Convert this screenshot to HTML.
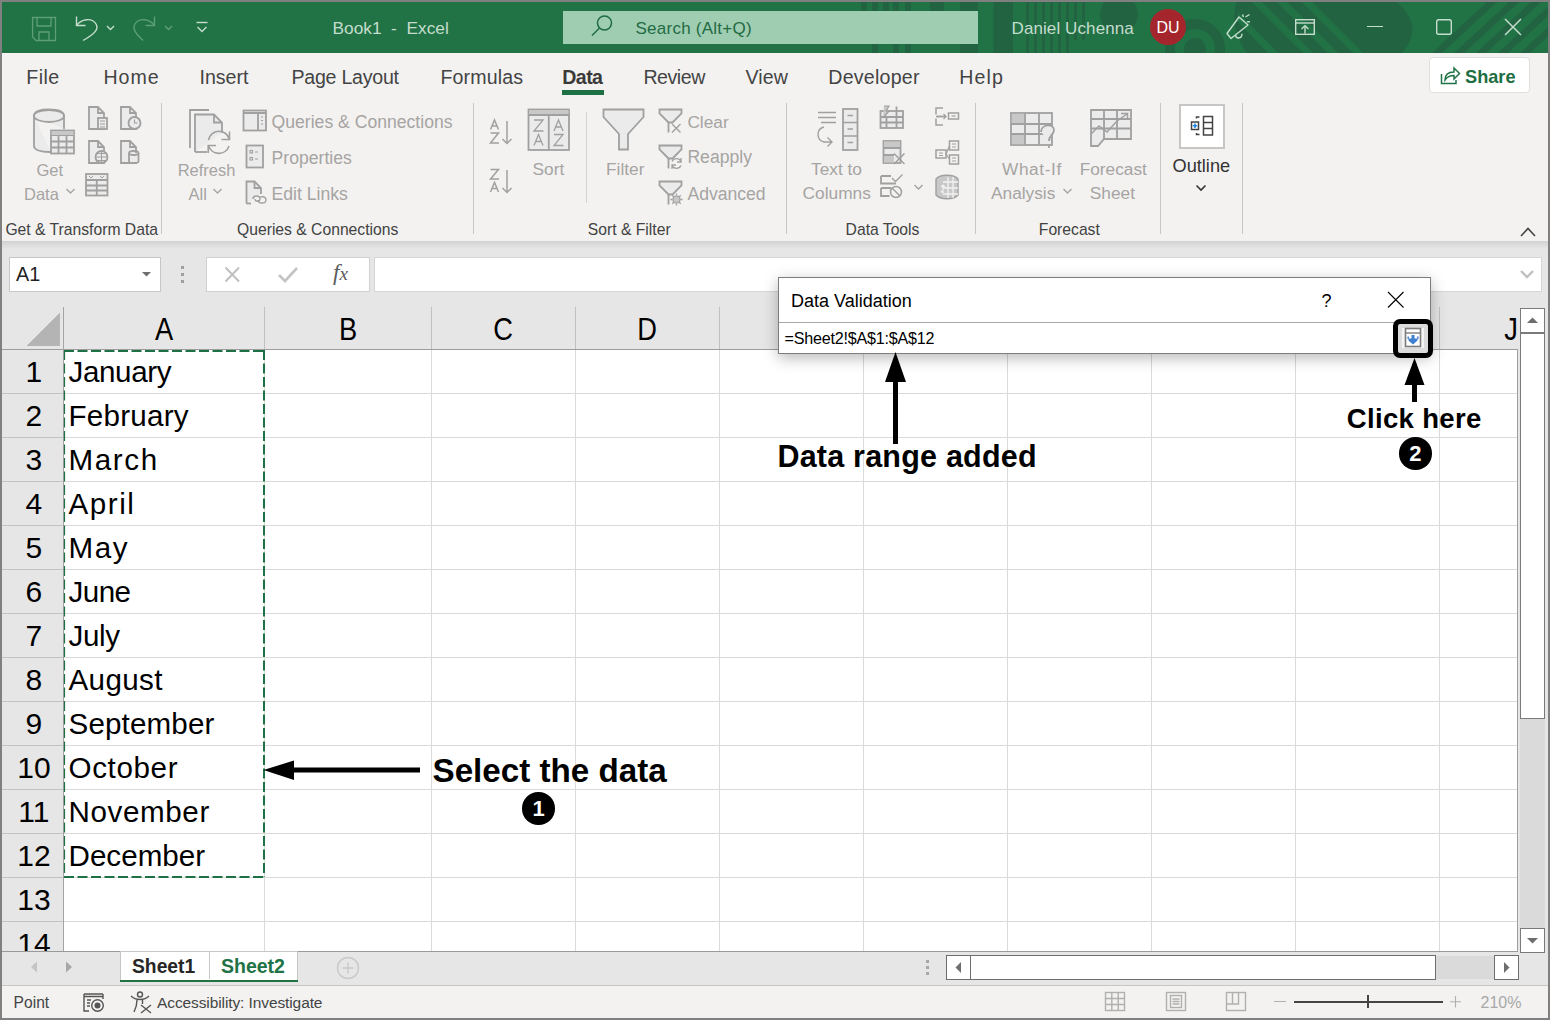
<!DOCTYPE html>
<html><head><meta charset="utf-8">
<style>
*{margin:0;padding:0;box-sizing:border-box}
html,body{width:1550px;height:1020px;overflow:hidden;background:#808080;font-family:"Liberation Sans",sans-serif;position:relative}
.a{position:absolute}
.t{position:absolute;line-height:1;white-space:nowrap}
svg.a{overflow:visible}
</style></head><body>
<div class="a" style="left:2px;top:2px;width:1546px;height:51px;background:#217346;"></div>
<svg class="a" style="left:2px;top:2px;" width="1546" height="51" viewBox="0 0 1546 51"><defs><clipPath id="tc"><rect x="0" y="0" width="1546" height="51"/></clipPath></defs>
<g clip-path="url(#tc)" fill="#226342">
<rect x="859" y="0" width="6" height="9"/><rect x="881" y="0" width="6" height="9"/><rect x="928" y="0" width="14" height="9"/><rect x="870" y="0" width="6" height="51"/><rect x="891" y="0" width="6" height="51"/><rect x="903" y="0" width="6" height="51"/><rect x="958" y="0" width="18" height="51"/><rect x="991.5" y="0" width="19.5" height="51"/><rect x="1024" y="0" width="3" height="51"/><rect x="1032" y="0" width="3" height="51"/><rect x="1040" y="0" width="3" height="51"/><rect x="1048" y="0" width="3" height="51"/><rect x="1056" y="0" width="3" height="51"/><rect x="1064" y="0" width="3" height="51"/><rect x="1072" y="0" width="3" height="38"/><rect x="1080" y="0" width="3" height="38"/>
<circle cx="1117" cy="12" r="19"/>
<circle cx="1193" cy="47" r="25" fill="none" stroke="#226342" stroke-width="10"/><circle cx="1193" cy="47" r="11"/>

<path d="M1235 -2 H1393 Q1425 25 1398 53 H1246 Q1226 25 1235 -2 Z"/><g fill="#217346"><path d="M1236 10 L1236 20 L1266 51 L1276 51 Z"/><path d="M1250 0 L1260 0 L1311 51 L1301 51 Z"/><path d="M1275 0 L1285 0 L1336 51 L1326 51 Z"/><path d="M1300 0 L1310 0 L1361 51 L1351 51 Z"/></g>
<path d="M1430 51 L1440 51 L1495 0 L1485 0 Z"/><path d="M1452 51 L1462 51 L1517 0 L1507 0 Z"/><path d="M1474 51 L1484 51 L1539 0 L1529 0 Z"/><path d="M1496 51 L1506 51 L1561 0 L1551 0 Z"/><path d="M1518 51 L1528 51 L1583 0 L1573 0 Z"/>
</g></svg>
<svg class="a" style="left:30px;top:15px;" width="30" height="30" viewBox="0 0 30 30"><g fill="none" stroke="#5d9e77" stroke-width="1.3"><path d="M2.6 2.5 H25.5 V25.5 H6 L2.6 22 Z"/><path d="M7 2.5 V11 H21 V2.5"/><path d="M9 25.5 V17 H19 V25.5"/></g></svg>
<svg class="a" style="left:72px;top:12px;" width="50" height="32" viewBox="0 0 50 32"><g fill="none" stroke="#c4ddcc" stroke-width="1.4"><path d="M4.5 4.5 V13.5 H13.5"/><path d="M4.5 13.5 C9 7 20 5 24 12 C27 17 23 22 11 28.5"/><path d="M35 14 L38.5 17.5 L42 14"/></g></svg>
<svg class="a" style="left:130px;top:12px;" width="50" height="32" viewBox="0 0 50 32"><g fill="none" stroke="#5d9e77" stroke-width="1.4"><path d="M24.5 4.5 V13.5 H15.5"/><path d="M24.5 13.5 C20 7 9 5 5 12 C2 17 6 22 13 28.5"/><path d="M35 14 L38.5 17.5 L42 14"/></g></svg>
<svg class="a" style="left:194px;top:18px;" width="16" height="18" viewBox="0 0 16 18"><g fill="none" stroke="#c4ddcc" stroke-width="1.4"><path d="M2.5 4.5 H13.5"/><path d="M3.5 9 L8 13.5 L12.5 9"/></g></svg>
<div class="t" style="left:332.5px;top:19.9px;font-size:17.3px;color:#c4ddcc;">Book1&nbsp;&nbsp;-&nbsp;&nbsp;Excel</div>
<div class="a" style="left:563px;top:11px;width:415px;height:33px;background:#9fcdb2;"></div>
<svg class="a" style="left:588px;top:13px;" width="28" height="28" viewBox="0 0 28 28"><g fill="none" stroke="#1f6b43" stroke-width="1.5"><circle cx="16.5" cy="10" r="7"/><path d="M11.5 15 L4 22.5"/></g></svg>
<div class="t" style="left:635.5px;top:19.9px;font-size:17px;color:#1f6b43;letter-spacing:0.25px;">Search (Alt+Q)</div>
<div class="t" style="left:1011.5px;top:20.2px;font-size:17px;color:#c4ddcc;letter-spacing:0.1px;">Daniel Uchenna</div>
<div class="a" style="left:1150px;top:9px;width:36px;height:36px;border-radius:50%;background:#a4262c"></div>
<div class="t" style="left:1168px;transform:translateX(-50%);top:20.1px;font-size:16px;color:#fff;">DU</div>
<svg class="a" style="left:1224px;top:12px;" width="30" height="30" viewBox="0 0 30 30"><g fill="none" stroke="#c4ddcc" stroke-width="1.4" stroke-linejoin="round"><path d="M3 21.5 L7 26.5 L24 13 L15 5 Z"/><path d="M11.5 23.5 A3.2 3.2 0 0 0 17.8 21.8"/><path d="M18.5 2.5 L19.5 5"/><path d="M21.5 5 L25.5 2.5"/><path d="M23 9.8 L26 9.8"/></g></svg>
<svg class="a" style="left:1293px;top:17px;" width="24" height="20" viewBox="0 0 24 20"><g fill="none" stroke="#c4ddcc" stroke-width="1.4"><rect x="2.7" y="2.7" width="18.6" height="14.6"/><path d="M2.7 6 H21.3"/><path d="M12 16.5 V9"/><path d="M8.5 12 L12 8.7 L15.5 12"/></g></svg>
<div class="a" style="left:1367px;top:26px;width:16px;height:1.4px;background:#c4ddcc;"></div>
<svg class="a" style="left:1434px;top:17px;" width="20" height="20" viewBox="0 0 20 20"><rect x="2.7" y="2.7" width="14.6" height="14.6" rx="2" fill="none" stroke="#c4ddcc" stroke-width="1.4"/></svg>
<svg class="a" style="left:1503px;top:17px;" width="20" height="20" viewBox="0 0 20 20"><g stroke="#c4ddcc" stroke-width="1.5"><path d="M2 2 L18 18 M18 2 L2 18"/></g></svg>
<div class="a" style="left:2px;top:53px;width:1546px;height:188px;background:#f3f2f1;"></div>
<div class="t" style="left:26.3px;top:67.5px;font-size:19.6px;color:#444;letter-spacing:0.42px;">File</div>
<div class="t" style="left:103.5px;top:67.5px;font-size:19.6px;color:#444;letter-spacing:0.92px;">Home</div>
<div class="t" style="left:199.5px;top:67.5px;font-size:19.6px;color:#444;letter-spacing:-0.03px;">Insert</div>
<div class="t" style="left:291.40000000000003px;top:67.5px;font-size:19.6px;color:#444;letter-spacing:-0.24px;">Page Layout</div>
<div class="t" style="left:440.40000000000003px;top:67.5px;font-size:19.6px;color:#444;letter-spacing:0.16px;">Formulas</div>
<div class="t" style="left:562.2px;top:67.5px;font-size:19.6px;color:#3b3a39;font-weight:bold;letter-spacing:-0.55px">Data</div>
<div class="t" style="left:643.4px;top:67.5px;font-size:19.6px;color:#444;letter-spacing:-0.47px;">Review</div>
<div class="t" style="left:745.5999999999999px;top:67.5px;font-size:19.6px;color:#444;letter-spacing:0.05px;">View</div>
<div class="t" style="left:828.3px;top:67.5px;font-size:19.6px;color:#444;letter-spacing:0.24px;">Developer</div>
<div class="t" style="left:959.1999999999999px;top:67.5px;font-size:19.6px;color:#444;letter-spacing:1.12px;">Help</div>
<div class="a" style="left:562px;top:90px;width:42px;height:4.5px;background:#1e7145;"></div>
<div class="a" style="left:1429px;top:57px;width:101px;height:36px;background:#fff;border:1px solid #e1dfdd;border-radius:4px"></div>
<svg class="a" style="left:1439px;top:64px;" width="22" height="22" viewBox="0 0 22 22"><g fill="none" stroke="#217346" stroke-width="1.5"><path d="M2.5 10 V19.5 H17 V16"/><path d="M6 16 C6 10 10 8 15 8 V4 L20.5 9.5 L15 15 V11.5 C11 11.5 8 13 6 16 Z"/></g></svg>
<div class="t" style="left:1465px;top:67.9px;font-size:18.2px;color:#1f6e43;font-weight:bold;">Share</div>
<div class="a" style="left:161px;top:103px;width:1px;height:131px;background:#c8c6c4;"></div>
<div class="a" style="left:473px;top:103px;width:1px;height:131px;background:#c8c6c4;"></div>
<div class="a" style="left:786px;top:103px;width:1px;height:131px;background:#c8c6c4;"></div>
<div class="a" style="left:975px;top:103px;width:1px;height:131px;background:#c8c6c4;"></div>
<div class="a" style="left:1160px;top:103px;width:1px;height:131px;background:#c8c6c4;"></div>
<div class="a" style="left:1242px;top:103px;width:1px;height:131px;background:#c8c6c4;"></div>
<div class="a" style="left:586px;top:112px;width:1px;height:91px;background:#d4d2d0;"></div>
<div class="t" style="left:5.4px;top:221.5px;font-size:15.7px;color:#424242;">Get &amp; Transform Data</div>
<div class="t" style="left:237px;top:221.5px;font-size:15.7px;color:#424242;">Queries &amp; Connections</div>
<div class="t" style="left:587.8px;top:221.5px;font-size:15.7px;color:#424242;">Sort &amp; Filter</div>
<div class="t" style="left:845.6px;top:221.5px;font-size:15.7px;color:#424242;">Data Tools</div>
<div class="t" style="left:1038.8px;top:221.5px;font-size:15.7px;color:#424242;">Forecast</div>
<svg class="a" style="left:31px;top:107px;" width="46" height="50" viewBox="0 0 46 50"><g fill="none" stroke="#a0a0a0" stroke-width="1.8"><path d="M3 9 V39 C3 43 10 45 18 45 H20" fill="#ebebeb"/><path d="M3 9 C3 4 10 2.5 17.5 2.5 C25 2.5 33 4 33 9 V22" fill="#ebebeb"/><ellipse cx="18" cy="9" rx="15" ry="6" fill="#ebebeb"/><rect x="20" y="23.5" width="23" height="23" fill="#ebebeb"/><path d="M20 28 H43 M20 34.5 H43 M20 40.5 H43 M27.5 28 V46.5 M35.5 28 V46.5" /><rect x="20.5" y="24" width="22" height="4" fill="#c8c8c8" stroke="none"/></g></svg>
<div class="t" style="left:36.5px;top:162.3px;font-size:16.5px;color:#a6a4a2;">Get</div>
<div class="t" style="left:24px;top:186.3px;font-size:16.5px;color:#a6a4a2;">Data</div>
<svg class="a" style="left:64px;top:186px;" width="14" height="10" viewBox="0 0 14 10"><path d="M2.5 3 L6.5 7 L10.5 3" fill="none" stroke="#a6a4a2" stroke-width="1.4"/></svg>
<svg class="a" style="left:87px;top:106px;" width="24" height="26" viewBox="0 0 24 26"><g fill="none" stroke="#a0a0a0" stroke-width="1.8"><path d="M2 1 H11 L17 7 V23 H2 Z" fill="#ebebeb"/><path d="M11 1 V7 H17"/><rect x="11" y="12" width="9" height="11" fill="#ebebeb"/><path d="M13 15 H18 M13 18 H18 M13 21 H18" stroke-width="1.2"/></g></svg>
<svg class="a" style="left:119px;top:106px;" width="24" height="26" viewBox="0 0 24 26"><g fill="none" stroke="#a0a0a0" stroke-width="1.8"><path d="M2 1 H11 L17 7 V23 H2 Z" fill="#ebebeb"/><path d="M11 1 V7 H17"/><circle cx="15.5" cy="17" r="6" fill="#ebebeb"/><path d="M15.5 13.5 V17 H18.5" stroke-width="1.2"/></g></svg>
<svg class="a" style="left:87px;top:140px;" width="24" height="26" viewBox="0 0 24 26"><g fill="none" stroke="#a0a0a0" stroke-width="1.8"><path d="M2 1 H11 L17 7 V23 H2 Z" fill="#ebebeb"/><path d="M11 1 V7 H17"/><circle cx="14.5" cy="17" r="6" fill="#ebebeb"/><path d="M8.5 17 H20.5 M14.5 11 V23 M10 13.5 H19 M10 20.5 H19" stroke-width="1"/></g></svg>
<svg class="a" style="left:119px;top:140px;" width="24" height="26" viewBox="0 0 24 26"><g fill="none" stroke="#a0a0a0" stroke-width="1.8"><path d="M2 1 H11 L17 7 V23 H2 Z" fill="#ebebeb"/><path d="M11 1 V7 H17"/><path d="M10 13 V21.5 C10 23.5 19.5 23.5 19.5 21.5 V13" fill="#ebebeb"/><ellipse cx="14.75" cy="13" rx="4.75" ry="2"/></g></svg>
<svg class="a" style="left:84px;top:172px;" width="26" height="26" viewBox="0 0 26 26"><g fill="none" stroke="#a0a0a0" stroke-width="1.8"><rect x="2" y="2" width="21.5" height="21.5" fill="#ebebeb"/><path d="M2 8 H23.5 M2 13.5 H23.5 M2 18.5 H23.5 M12.75 8 V23.5"/><path d="M5 4 L7 6 L9 4 M16 4 L18 6 L20 4" stroke-width="1"/></g></svg>
<svg class="a" style="left:187px;top:107px;" width="48" height="50" viewBox="0 0 48 50"><g fill="none" stroke="#a0a0a0" stroke-width="1.8"><path d="M3 41 V3 H22"/><path d="M8 45 V7.5 H27 L35 15.5 V26" fill="#ebebeb"/><path d="M27 7.5 V15.5 H35"/><path d="M8 45 H20"/><path d="M21.5 33 A10.7 10.7 0 0 1 42.3 32 M42.5 24.5 V32.5 H34.5 M42 39 A10.7 10.7 0 0 1 21.5 38.5 M21.2 46 V38.5 H29" stroke-width="1.6"/></g></svg>
<div class="t" style="left:177.7px;top:162.3px;font-size:16.5px;color:#a6a4a2;">Refresh</div>
<div class="t" style="left:188.5px;top:186.3px;font-size:16.5px;color:#a6a4a2;">All</div>
<svg class="a" style="left:211px;top:186px;" width="14" height="10" viewBox="0 0 14 10"><path d="M2.5 3 L6.5 7 L10.5 3" fill="none" stroke="#a6a4a2" stroke-width="1.4"/></svg>
<svg class="a" style="left:242px;top:109px;" width="26" height="24" viewBox="0 0 26 24"><g fill="none" stroke="#a0a0a0" stroke-width="1.8"><rect x="1.5" y="1.5" width="22.5" height="20" fill="#ebebeb"/><path d="M1.5 4 H24 M16 4 V21.5"/><path d="M19 8 H21 M19 11.5 H21 M19 15 H21" stroke-width="1.2"/></g></svg>
<svg class="a" style="left:245px;top:144px;" width="20" height="26" viewBox="0 0 20 26"><g fill="none" stroke="#a0a0a0" stroke-width="1.8"><rect x="1.5" y="1.5" width="16.5" height="22" fill="#ebebeb"/><rect x="5" y="6.5" width="2.5" height="2.5" stroke-width="1.1"/><rect x="5" y="13.5" width="2.5" height="2.5" stroke-width="1.1"/><path d="M10 8 H13 M10 15 H13" stroke-width="1.1"/></g></svg>
<svg class="a" style="left:245px;top:180px;" width="24" height="26" viewBox="0 0 24 26"><g fill="none" stroke="#a0a0a0" stroke-width="1.8"><path d="M1.5 23.5 V1.5 H9.5 L16 8 V14" fill="#ebebeb"/><path d="M9.5 1.5 V8 H16"/><path d="M1.5 23.5 H6"/><path d="M8 19 C8 15 15 15 15 19 C15 22 10 22 10 19 M13 20 C13 24 21 24 21 20 C21 16 15 16 15 18" stroke-width="1.3"/></g></svg>
<div class="t" style="left:271.6px;top:114.2px;font-size:17.6px;color:#a6a4a2;">Queries &amp; Connections</div>
<div class="t" style="left:271.6px;top:150.0px;font-size:17.6px;color:#a6a4a2;">Properties</div>
<div class="t" style="left:271.6px;top:185.6px;font-size:17.6px;color:#a6a4a2;">Edit Links</div>
<svg class="a" style="left:488px;top:118px;" width="28" height="28" viewBox="0 0 28 28"><g fill="none" stroke="#a0a0a0" stroke-width="1.5"><path d="M2.5 11.5 L6.5 2 L10.5 11.5 M4 8 H9"/><path d="M2.5 15 H10.5 L2.5 25 H11"/><path d="M19 3 V25.5 M14.5 21 L19 25.5 L23.5 21"/></g></svg>
<svg class="a" style="left:488px;top:167px;" width="28" height="28" viewBox="0 0 28 28"><g fill="none" stroke="#a0a0a0" stroke-width="1.5"><path d="M2.5 2.5 H10.5 L2.5 12 H11"/><path d="M2.5 25 L6.5 15.5 L10.5 25 M4 21.5 H9"/><path d="M19 3 V25.5 M14.5 21 L19 25.5 L23.5 21"/></g></svg>
<svg class="a" style="left:527px;top:108px;" width="44" height="44" viewBox="0 0 44 44"><g fill="none" stroke="#a0a0a0" stroke-width="1.8"><rect x="1.5" y="1.5" width="40.5" height="40.5" fill="#ebebeb"/><rect x="2" y="2" width="39.5" height="5" fill="#c8c8c8" stroke="none"/><path d="M1.5 7 H42 M21.75 7 V42"/><path d="M7 12 H16 L7 23 H16.5 M7 37.5 L11.5 26.5 L16 37.5 M8.6 33.5 H14.4 M27 23 L31.5 12 L36 23 M28.6 19 H34.4 M27 26.5 H36 L27 37.5 H36.5" stroke-width="1.3"/></g></svg>
<div class="t" style="left:532.5px;top:160.6px;font-size:17.3px;color:#a6a4a2;">Sort</div>
<svg class="a" style="left:601px;top:107px;" width="46" height="46" viewBox="0 0 46 46"><g fill="none" stroke="#a0a0a0" stroke-width="1.8"><path d="M2.5 2.5 H42.5 V10 L27 27 V42.5 H18 V27 L2.5 10 Z" fill="#ebebeb"/></g></svg>
<div class="t" style="left:606px;top:160.6px;font-size:17.3px;color:#a6a4a2;">Filter</div>
<svg class="a" style="left:658px;top:108px;" width="26" height="26" viewBox="0 0 26 26"><g fill="none" stroke="#a0a0a0" stroke-width="1.8"><path d="M1.5 1.5 H23.5 V5.5 L14.5 14.5 H10.5 L1.5 5.5 Z" fill="#ebebeb"/><path d="M10.5 14.5 V24.5"/><path d="M14 16 L22.5 24.5 M22.5 16 L14 24.5" stroke-width="1.4"/></g></svg>
<svg class="a" style="left:658px;top:144px;" width="26" height="26" viewBox="0 0 26 26"><g fill="none" stroke="#a0a0a0" stroke-width="1.8"><path d="M1.5 1.5 H23.5 V5.5 L14.5 14.5 H10.5 L1.5 5.5 Z" fill="#ebebeb"/><path d="M10.5 14.5 V24.5"/><path d="M14 17.5 A5 5 0 0 1 23 17.5 M23 14 V18 H19 M23 21.5 A5 5 0 0 1 14 21.5 M14 25 V21 H18" stroke-width="1.3"/></g></svg>
<svg class="a" style="left:658px;top:180px;" width="26" height="26" viewBox="0 0 26 26"><g fill="none" stroke="#a0a0a0" stroke-width="1.8"><path d="M1.5 1.5 H23.5 V5.5 L14.5 14.5 H10.5 L1.5 5.5 Z" fill="#ebebeb"/><path d="M10.5 14.5 V24.5"/><circle cx="18.5" cy="19.5" r="3.5" fill="#c8c8c8" stroke-width="1.2"/><path d="M18.5 13.5 V15.5 M18.5 23.5 V25.5 M12.5 19.5 H14.5 M22.5 19.5 H24.5 M14.3 15.3 L15.7 16.7 M21.3 22.3 L22.7 23.7 M14.3 23.7 L15.7 22.3 M21.3 16.7 L22.7 15.3" stroke-width="1.3"/></g></svg>
<div class="t" style="left:687.4px;top:113.8px;font-size:17.3px;color:#a6a4a2;">Clear</div>
<div class="t" style="left:687.4px;top:149.0px;font-size:17.6px;color:#a6a4a2;">Reapply</div>
<div class="t" style="left:687.4px;top:185.7px;font-size:17.6px;color:#a6a4a2;">Advanced</div>
<svg class="a" style="left:814px;top:107px;" width="48" height="48" viewBox="0 0 48 48"><g fill="none" stroke="#a0a0a0" stroke-width="1.8"><path d="M20 5.5 H38 M20 10.5 H38 M23 15.5 H38" stroke-width="1.4" transform="translate(-16,0)"/><path d="M10 20 C2 22 2 33 10 35 H18 M13.5 30.5 L18 35 L13.5 39.5" stroke-width="1.4"/><rect x="29" y="2" width="14.5" height="41" fill="#ebebeb"/><path d="M29 15.5 H43.5 M29 29 H43.5 M33.5 8.5 H39 M33.5 22 H39 M33.5 35.5 H39" stroke-width="1.3"/></g></svg>
<div class="t" style="left:811px;top:160.9px;font-size:17.3px;color:#a6a4a2;">Text to</div>
<div class="t" style="left:802.6px;top:185.0px;font-size:17.3px;color:#a6a4a2;">Columns</div>
<svg class="a" style="left:879px;top:105px;" width="26" height="26" viewBox="0 0 26 26"><g fill="none" stroke="#a0a0a0" stroke-width="1.8"><rect x="1.5" y="6" width="22.5" height="17" fill="#ebebeb"/><path d="M1.5 12 H24 M1.5 17.5 H24 M7.5 12 V23 M17.5 1.5 V23"/><path d="M5 1 L10 1 L7 6 L10 6 L4 13" fill="#c8c8c8" stroke-width="1.2"/></g></svg>
<svg class="a" style="left:881px;top:139px;" width="26" height="26" viewBox="0 0 26 26"><g fill="none" stroke="#a0a0a0" stroke-width="1.8"><rect x="2.5" y="2" width="17" height="22" fill="#ebebeb"/><rect x="3" y="2.5" width="16" height="6" fill="#c8c8c8" stroke="none"/><rect x="3" y="16" width="10" height="7.5" fill="#c8c8c8" stroke="none"/><path d="M2.5 9 H19.5 M2.5 16 H13"/><path d="M13 14.5 L23.5 25 M23.5 14.5 L13 25" stroke-width="1.5"/></g></svg>
<svg class="a" style="left:879px;top:172px;" width="26" height="28" viewBox="0 0 26 28"><g fill="none" stroke="#a0a0a0" stroke-width="1.8"><path d="M2 4 H12 M2 4 V11.5 H17 M2 16 H12 M2 16 V24 H10.5"/><path d="M13 6 L16.5 9.5 L23.5 2.5" stroke-width="1.4"/><circle cx="17" cy="20" r="5.5" stroke-width="1.5"/><path d="M13 16 L21 24" stroke-width="1.4"/></g></svg>
<svg class="a" style="left:912px;top:182px;" width="14" height="10" viewBox="0 0 14 10"><path d="M2.5 3 L6.5 7 L10.5 3" fill="none" stroke="#a0a0a0" stroke-width="1.3"/></svg>
<svg class="a" style="left:934px;top:106px;" width="28" height="24" viewBox="0 0 28 24"><g fill="none" stroke="#a0a0a0" stroke-width="1.8"><path d="M9 2 H2 V8.5 M2 12.5 V19 H9 M2 10.5 H9" stroke-width="1.5"/><path d="M3 10.5 H12 M9.5 8 L12 10.5 L9.5 13" stroke-width="1.3"/><rect x="14.5" y="7" width="10" height="6" stroke-width="1.5"/><path d="M17.5 10 H21.5" stroke-width="1.2"/></g></svg>
<svg class="a" style="left:934px;top:139px;" width="28" height="28" viewBox="0 0 28 28"><g fill="none" stroke="#a0a0a0" stroke-width="1.8"><rect x="2" y="11" width="10" height="8" stroke-width="1.5"/><rect x="15.5" y="2" width="9" height="9" stroke-width="1.5"/><rect x="15.5" y="16" width="9" height="9" stroke-width="1.5"/><path d="M12 15 L15.5 7 M12 15 L15.5 20" stroke-width="1.3"/><path d="M5 14 H9 M5 16.5 H9 M18 5 H22 M18 8 H22 M18 19 H22 M18 22 H22" stroke-width="1"/></g></svg>
<svg class="a" style="left:934px;top:173px;" width="28" height="28" viewBox="0 0 28 28"><g fill="none" stroke="#a0a0a0" stroke-width="1.8"><path d="M2 6 C6 1 20 1 24 6 V22 C20 27 6 27 2 22 Z" fill="#c8c8c8" stroke-width="1.4"/><path d="M9 9 H24 M9 15 H24 M9 21 H24 M14 4 V25 M19 4 V25" stroke="#f3f2f1" stroke-width="1.3"/><path d="M9 12 V20 M7 14 L9 12 L11 14 M7 18 L9 20" stroke="#f3f2f1" stroke-width="1.2"/></g></svg>
<svg class="a" style="left:1009px;top:111px;" width="50" height="46" viewBox="0 0 50 46"><g fill="none" stroke="#a0a0a0" stroke-width="1.8"><rect x="2" y="2" width="41" height="32" fill="#ebebeb"/><rect x="2.8" y="2.8" width="12.5" height="10" fill="#c8c8c8" stroke="none"/><rect x="2.8" y="23" width="12.5" height="10.2" fill="#c8c8c8" stroke="none"/><path d="M2 13 H43 M2 23 H43 M16 2 V34 M30 2 V34"/><path d="M32 21 C32 13 45 12 45 19 C45 24 40 24 40 30 M40 34.5 V37" stroke-width="1.8" fill="#ebebeb"/></g></svg>
<div class="t" style="left:1002px;top:161.0px;font-size:17.3px;color:#a6a4a2;letter-spacing:0.6px;">What-If</div>
<div class="t" style="left:991px;top:185.0px;font-size:17.3px;color:#a6a4a2;">Analysis</div>
<svg class="a" style="left:1061px;top:186px;" width="14" height="10" viewBox="0 0 14 10"><path d="M2.5 3 L6.5 7 L10.5 3" fill="none" stroke="#a6a4a2" stroke-width="1.4"/></svg>
<svg class="a" style="left:1089px;top:108px;" width="46" height="44" viewBox="0 0 46 44"><g fill="none" stroke="#a0a0a0" stroke-width="1.8"><path d="M2 2 H42 V31 H15 L9 38 H2 Z" fill="#ebebeb"/><path d="M2 11 H42 M2 20.5 H42 M15 2 V31 M28 2 V31"/><path d="M2 26 L10 18 L18 24 L28 13 L38 6 M32 5.5 H38.5 V12" stroke-width="1.5"/></g></svg>
<div class="t" style="left:1079.7px;top:161.0px;font-size:17.3px;color:#a6a4a2;">Forecast</div>
<div class="t" style="left:1089.8px;top:185.0px;font-size:17.3px;color:#a6a4a2;">Sheet</div>
<div class="a" style="left:1179px;top:104px;width:46px;height:45px;background:#fff;border:2px solid #c8c6c4"></div>
<svg class="a" style="left:1189px;top:113px;" width="26" height="26" viewBox="0 0 26 26"><g fill="none" stroke="#444" stroke-width="1.5"><rect x="2.5" y="9" width="7" height="7.5"/><path d="M7.5 5.5 V4 H10.5 M7.5 20 V21.5 H10.5"/><rect x="14.5" y="3.5" width="9" height="18.5"/><path d="M14.5 9.5 H23.5 M14.5 15.5 H23.5"/></g><path d="M6 10.5 V15 M3.8 12.75 H8.2" stroke="#1e88e5" stroke-width="1.6"/></svg>
<div class="t" style="left:1172.5px;top:157.4px;font-size:18.2px;color:#333;">Outline</div>
<svg class="a" style="left:1194px;top:183px;" width="14" height="10" viewBox="0 0 14 10"><path d="M2.5 2.5 L7 7 L11.5 2.5" fill="none" stroke="#333" stroke-width="1.6"/></svg>
<svg class="a" style="left:1518px;top:223px;" width="20" height="16" viewBox="0 0 20 16"><path d="M3 13 L10 5.5 L17 13" fill="none" stroke="#444" stroke-width="1.6"/></svg>
<div class="a" style="left:2px;top:241px;width:1546px;height:66px;background:#e6e6e6;"></div>
<div class="a" style="left:2px;top:241px;width:1546px;height:8px;background:linear-gradient(#d2d2d2,#e6e6e6)"></div>
<div class="a" style="left:9px;top:257px;width:152px;height:35px;background:#fff;border:1px solid #c6c6c6"></div>
<div class="t" style="left:16px;top:265.0px;font-size:19.8px;color:#222;">A1</div>
<svg class="a" style="left:140px;top:270px;" width="14" height="8" viewBox="0 0 14 8"><path d="M2 2 H11 L6.5 6.5 Z" fill="#6f6f6f"/></svg>
<div class="a" style="left:181px;top:266px;width:3px;height:3px;background:#a0a0a0;"></div>
<div class="a" style="left:181px;top:273px;width:3px;height:3px;background:#a0a0a0;"></div>
<div class="a" style="left:181px;top:280px;width:3px;height:3px;background:#a0a0a0;"></div>
<div class="a" style="left:206px;top:257px;width:164px;height:35px;background:#fff;border:1px solid #d0d0d0"></div>
<svg class="a" style="left:222px;top:265px;" width="22" height="20" viewBox="0 0 22 20"><path d="M3.5 2.5 L17 16.5 M17 2.5 L3.5 16.5" stroke="#c0c0c0" stroke-width="2" fill="none"/></svg>
<svg class="a" style="left:276px;top:265px;" width="24" height="20" viewBox="0 0 24 20"><path d="M3 10 L9 16 L21 3" stroke="#c4c4c4" stroke-width="2.6" fill="none"/></svg>
<div class="t" style="left:333px;top:260.9px;font-size:23px;color:#5a5a5a;font-family:'Liberation Serif',serif"><i>f</i><i style="font-size:19px">x</i></div>
<div class="a" style="left:374px;top:257px;width:1168px;height:35px;background:#fff;border:1px solid #d6d6d6"></div>
<svg class="a" style="left:1518px;top:267px;" width="18" height="14" viewBox="0 0 18 14"><path d="M3 4 L9 10 L15 4" stroke="#c0c0c0" stroke-width="2.4" fill="none"/></svg>
<div class="a" style="left:2px;top:307px;width:1546px;height:646px;background:#e6e6e6;"></div>
<div class="a" style="left:64px;top:350px;width:1454px;height:602px;background:#fff;"></div>
<svg class="a" style="left:0;top:0" width="1550" height="1020" shape-rendering="crispEdges"><rect x="64" y="393" width="1454" height="1" fill="#dadada"/><rect x="2" y="393" width="61" height="1" fill="#c2c2c2"/><rect x="64" y="437" width="1454" height="1" fill="#dadada"/><rect x="2" y="437" width="61" height="1" fill="#c2c2c2"/><rect x="64" y="481" width="1454" height="1" fill="#dadada"/><rect x="2" y="481" width="61" height="1" fill="#c2c2c2"/><rect x="64" y="525" width="1454" height="1" fill="#dadada"/><rect x="2" y="525" width="61" height="1" fill="#c2c2c2"/><rect x="64" y="569" width="1454" height="1" fill="#dadada"/><rect x="2" y="569" width="61" height="1" fill="#c2c2c2"/><rect x="64" y="613" width="1454" height="1" fill="#dadada"/><rect x="2" y="613" width="61" height="1" fill="#c2c2c2"/><rect x="64" y="657" width="1454" height="1" fill="#dadada"/><rect x="2" y="657" width="61" height="1" fill="#c2c2c2"/><rect x="64" y="701" width="1454" height="1" fill="#dadada"/><rect x="2" y="701" width="61" height="1" fill="#c2c2c2"/><rect x="64" y="745" width="1454" height="1" fill="#dadada"/><rect x="2" y="745" width="61" height="1" fill="#c2c2c2"/><rect x="64" y="789" width="1454" height="1" fill="#dadada"/><rect x="2" y="789" width="61" height="1" fill="#c2c2c2"/><rect x="64" y="833" width="1454" height="1" fill="#dadada"/><rect x="2" y="833" width="61" height="1" fill="#c2c2c2"/><rect x="64" y="877" width="1454" height="1" fill="#dadada"/><rect x="2" y="877" width="61" height="1" fill="#c2c2c2"/><rect x="64" y="921" width="1454" height="1" fill="#dadada"/><rect x="2" y="921" width="61" height="1" fill="#c2c2c2"/><rect x="264" y="350" width="1" height="601" fill="#dadada"/><rect x="264" y="307" width="1" height="42" fill="#c0c0c0"/><rect x="431" y="350" width="1" height="601" fill="#dadada"/><rect x="431" y="307" width="1" height="42" fill="#c0c0c0"/><rect x="575" y="350" width="1" height="601" fill="#dadada"/><rect x="575" y="307" width="1" height="42" fill="#c0c0c0"/><rect x="719" y="350" width="1" height="601" fill="#dadada"/><rect x="719" y="307" width="1" height="42" fill="#c0c0c0"/><rect x="863" y="350" width="1" height="601" fill="#dadada"/><rect x="863" y="307" width="1" height="42" fill="#c0c0c0"/><rect x="1007" y="350" width="1" height="601" fill="#dadada"/><rect x="1007" y="307" width="1" height="42" fill="#c0c0c0"/><rect x="1151" y="350" width="1" height="601" fill="#dadada"/><rect x="1151" y="307" width="1" height="42" fill="#c0c0c0"/><rect x="1295" y="350" width="1" height="601" fill="#dadada"/><rect x="1295" y="307" width="1" height="42" fill="#c0c0c0"/><rect x="1439" y="350" width="1" height="601" fill="#dadada"/><rect x="1439" y="307" width="1" height="42" fill="#c0c0c0"/><rect x="2" y="349" width="1516" height="1" fill="#9d9d9d"/><rect x="63" y="307" width="1" height="644" fill="#a4a4a4"/><rect x="1517" y="349" width="1" height="603" fill="#a0a0a0"/><rect x="2" y="951" width="1516" height="1" fill="#999"/><path d="M60 312 V346 H26 Z" fill="#b4b4b4"/></svg>
<div class="a" style="left:64px;top:307px;width:1453px;height:42px;overflow:hidden">
<div class="t" style="left:99.5px;top:7.0px;font-size:31px;color:#000;transform:translateX(-50%) scaleX(0.88)">A</div>
<div class="t" style="left:283.5px;top:7.0px;font-size:31px;color:#000;transform:translateX(-50%) scaleX(0.88)">B</div>
<div class="t" style="left:439.0px;top:7.0px;font-size:31px;color:#000;transform:translateX(-50%) scaleX(0.88)">C</div>
<div class="t" style="left:583.0px;top:7.0px;font-size:31px;color:#000;transform:translateX(-50%) scaleX(0.88)">D</div>
<div class="t" style="left:727.0px;top:7.0px;font-size:31px;color:#000;transform:translateX(-50%) scaleX(0.88)">E</div>
<div class="t" style="left:871.0px;top:7.0px;font-size:31px;color:#000;transform:translateX(-50%) scaleX(0.88)">F</div>
<div class="t" style="left:1015.0px;top:7.0px;font-size:31px;color:#000;transform:translateX(-50%) scaleX(0.88)">G</div>
<div class="t" style="left:1159.0px;top:7.0px;font-size:31px;color:#000;transform:translateX(-50%) scaleX(0.88)">H</div>
<div class="t" style="left:1303.0px;top:7.0px;font-size:31px;color:#000;transform:translateX(-50%) scaleX(0.88)">I</div>
<div class="t" style="left:1447.0px;top:7.0px;font-size:31px;color:#000;transform:translateX(-50%) scaleX(0.88)">J</div>
</div>
<div class="a" style="left:2px;top:350px;width:61px;height:601px;overflow:hidden">
<div class="t" style="left:31.9px;top:7.2px;font-size:30px;color:#000;transform:translateX(-50%)">1</div>
<div class="t" style="left:31.9px;top:51.2px;font-size:30px;color:#000;transform:translateX(-50%)">2</div>
<div class="t" style="left:31.9px;top:95.2px;font-size:30px;color:#000;transform:translateX(-50%)">3</div>
<div class="t" style="left:31.9px;top:139.2px;font-size:30px;color:#000;transform:translateX(-50%)">4</div>
<div class="t" style="left:31.9px;top:183.2px;font-size:30px;color:#000;transform:translateX(-50%)">5</div>
<div class="t" style="left:31.9px;top:227.2px;font-size:30px;color:#000;transform:translateX(-50%)">6</div>
<div class="t" style="left:31.9px;top:271.2px;font-size:30px;color:#000;transform:translateX(-50%)">7</div>
<div class="t" style="left:31.9px;top:315.2px;font-size:30px;color:#000;transform:translateX(-50%)">8</div>
<div class="t" style="left:31.9px;top:359.2px;font-size:30px;color:#000;transform:translateX(-50%)">9</div>
<div class="t" style="left:31.9px;top:403.2px;font-size:30px;color:#000;transform:translateX(-50%)">10</div>
<div class="t" style="left:31.9px;top:447.2px;font-size:30px;color:#000;transform:translateX(-50%)">11</div>
<div class="t" style="left:31.9px;top:491.2px;font-size:30px;color:#000;transform:translateX(-50%)">12</div>
<div class="t" style="left:31.9px;top:535.2px;font-size:30px;color:#000;transform:translateX(-50%)">13</div>
<div class="t" style="left:31.9px;top:579.2px;font-size:30px;color:#000;transform:translateX(-50%)">14</div>
</div>
<div class="t" style="left:68.5px;top:357.3px;font-size:29.6px;color:#000;letter-spacing:-0.38px;">January</div>
<div class="t" style="left:68.5px;top:401.3px;font-size:29.6px;color:#000;letter-spacing:0.23px;">February</div>
<div class="t" style="left:68.5px;top:445.3px;font-size:29.6px;color:#000;letter-spacing:1.6px;">March</div>
<div class="t" style="left:68.5px;top:489.3px;font-size:29.6px;color:#000;letter-spacing:1.55px;">April</div>
<div class="t" style="left:68.5px;top:533.3px;font-size:29.6px;color:#000;letter-spacing:1.55px;">May</div>
<div class="t" style="left:68.5px;top:577.3px;font-size:29.6px;color:#000;letter-spacing:-0.54px;">June</div>
<div class="t" style="left:68.5px;top:621.3px;font-size:29.6px;color:#000;letter-spacing:-0.4px;">July</div>
<div class="t" style="left:68.5px;top:665.3px;font-size:29.6px;color:#000;letter-spacing:0.36px;">August</div>
<div class="t" style="left:68.5px;top:709.3px;font-size:29.6px;color:#000;letter-spacing:0.14px;">September</div>
<div class="t" style="left:68.5px;top:753.3px;font-size:29.6px;color:#000;letter-spacing:0.62px;">October</div>
<div class="t" style="left:68.5px;top:797.3px;font-size:29.6px;color:#000;letter-spacing:0.61px;">November</div>
<div class="t" style="left:68.5px;top:841.3px;font-size:29.6px;color:#000;letter-spacing:0.02px;">December</div>
<svg class="a" style="left:0;top:0" width="1550" height="1020"><g fill="none" stroke="#1e7145" stroke-width="2" stroke-dasharray="10 3.5"><path d="M64 351 H264"/><path d="M264 350 V877"/><path d="M64 877 H264"/></g><path d="M64.5 350 V877" fill="none" stroke="#1e7145" stroke-width="1.2" stroke-dasharray="10 3.5"/></svg>
<div class="a" style="left:1520px;top:308px;width:25px;height:25px;background:#fff;border:1px solid #7a7a7a"></div>
<svg class="a" style="left:1520px;top:308px;" width="25" height="25" viewBox="0 0 25 25"><path d="M7 15 L12.5 9.5 L18 15 Z" fill="#6e6e6e"/></svg>
<div class="a" style="left:1520px;top:333px;width:25px;height:386px;background:#fff;border:1px solid #7a7a7a"></div>
<div class="a" style="left:1520px;top:719px;width:25px;height:209px;background:#dadada;"></div>
<div class="a" style="left:1520px;top:928px;width:25px;height:25px;background:#fff;border:1px solid #7a7a7a"></div>
<svg class="a" style="left:1520px;top:928px;" width="25" height="25" viewBox="0 0 25 25"><path d="M7 10 L12.5 15.5 L18 10 Z" fill="#6e6e6e"/></svg>
<div class="a" style="left:2px;top:953px;width:1546px;height:32px;background:#e6e6e6;"></div>
<div class="a" style="left:2px;top:985px;width:1546px;height:1px;background:#c8c6c4;"></div>
<div class="a" style="left:2px;top:986px;width:1546px;height:32px;background:#f3f2f1;"></div>
<svg class="a" style="left:28px;top:958px;" width="12" height="18" viewBox="0 0 12 18"><path d="M9 3.5 V14.5 L3 9 Z" fill="#c4c4c4"/></svg>
<svg class="a" style="left:63px;top:958px;" width="12" height="18" viewBox="0 0 12 18"><path d="M3 3.5 V14.5 L9 9 Z" fill="#a8a8a8"/></svg>
<div class="a" style="left:120px;top:951px;width:178px;height:31px;background:#fff;border-left:1px solid #c6c6c6;border-right:1px solid #c6c6c6;border-top:1px solid #c6c6c6"></div>
<div class="a" style="left:209px;top:952px;width:1px;height:27px;background:#c6c6c6;"></div>
<div class="a" style="left:120px;top:979.5px;width:178px;height:2px;background:#217346;"></div>
<div class="t" style="left:132px;top:957.2px;font-size:19.3px;color:#262626;font-weight:bold;">Sheet1</div>
<div class="t" style="left:221px;top:957.0px;font-size:19.5px;color:#217346;font-weight:bold;">Sheet2</div>
<svg class="a" style="left:334px;top:954px;" width="28" height="28" viewBox="0 0 28 28"><circle cx="14" cy="14" r="10.5" fill="none" stroke="#c8c8c8" stroke-width="1.4"/><path d="M14 8.5 V19.5 M8.5 14 H19.5" stroke="#c8c8c8" stroke-width="1.4"/></svg>
<div class="a" style="left:926px;top:960px;width:3px;height:3px;background:#a8a8a8;"></div>
<div class="a" style="left:926px;top:966px;width:3px;height:3px;background:#a8a8a8;"></div>
<div class="a" style="left:926px;top:972px;width:3px;height:3px;background:#a8a8a8;"></div>
<div class="a" style="left:946px;top:955px;width:25px;height:25px;background:#fff;border:1px solid #6e6e6e"></div>
<svg class="a" style="left:946px;top:955px;" width="25" height="25" viewBox="0 0 25 25"><path d="M15 7 V18 L9.5 12.5 Z" fill="#6e6e6e"/></svg>
<div class="a" style="left:970px;top:955px;width:466px;height:25px;background:#fff;border:1px solid #6e6e6e"></div>
<div class="a" style="left:1436px;top:956px;width:58px;height:23px;background:#dadada;"></div>
<div class="a" style="left:1494px;top:955px;width:25px;height:25px;background:#fff;border:1px solid #6e6e6e"></div>
<svg class="a" style="left:1494px;top:955px;" width="25" height="25" viewBox="0 0 25 25"><path d="M10 7 V18 L15.5 12.5 Z" fill="#6e6e6e"/></svg>
<div class="t" style="left:13.6px;top:994.7px;font-size:15.6px;color:#444;">Point</div>
<svg class="a" style="left:81px;top:991px;" width="26" height="22" viewBox="0 0 26 22"><g fill="none" stroke="#555" stroke-width="1.4"><path d="M3 3 H22 M3 5.5 H22 M3 3 V20 H8 M22 3 V8"/><path d="M6 9 H10 M6 12 H9 M6 15 H9"/></g><circle cx="16.5" cy="14.5" r="5.8" fill="none" stroke="#555" stroke-width="1.4"/><circle cx="16.5" cy="14.5" r="3" fill="#555"/></svg>
<svg class="a" style="left:128px;top:990px;" width="26" height="24" viewBox="0 0 26 24"><g fill="none" stroke="#555" stroke-width="1.4"><circle cx="12" cy="4.5" r="2.5"/><path d="M3 6 C6 9 9 9.5 12 9.5 C15 9.5 18 9 21 6"/><path d="M9 10 C9 15 8 18 6 22"/><path d="M14.5 10 V14"/><path d="M13 15 L23 23 M23 15 L13 23"/></g></svg>
<div class="t" style="left:157px;top:994.8px;font-size:15.5px;color:#444;letter-spacing:-0.1px;">Accessibility: Investigate</div>
<svg class="a" style="left:1103px;top:990px;" width="24" height="22" viewBox="0 0 24 22"><g fill="none" stroke="#b0b0b0" stroke-width="1.4"><rect x="2.5" y="2.5" width="19" height="18"/><path d="M2.5 8.5 H21.5 M2.5 14.5 H21.5 M8.8 2.5 V20.5 M15.2 2.5 V20.5"/></g></svg>
<svg class="a" style="left:1164px;top:990px;" width="24" height="22" viewBox="0 0 24 22"><g fill="none" stroke="#b0b0b0" stroke-width="1.4"><rect x="2.5" y="2.5" width="19" height="18"/><rect x="6.5" y="5.5" width="11" height="12"/><path d="M8.5 9 H15.5 M8.5 11.5 H15.5 M8.5 14 H15.5"/></g></svg>
<svg class="a" style="left:1224px;top:990px;" width="24" height="22" viewBox="0 0 24 22"><g fill="none" stroke="#b0b0b0" stroke-width="1.4"><rect x="2.5" y="2.5" width="19" height="18"/><path d="M2.5 14 H14.5 V2.5 M8.5 2.5 V14"/></g></svg>
<div class="a" style="left:1274px;top:1001px;width:12px;height:1.4px;background:#b0b0b0;"></div>
<div class="a" style="left:1294px;top:1001px;width:149px;height:2px;background:#444;"></div>
<div class="a" style="left:1367px;top:995px;width:2px;height:13px;background:#444;"></div>
<svg class="a" style="left:1449px;top:995px;" width="14" height="14" viewBox="0 0 14 14"><path d="M6.5 1 V12.5 M1 6.75 H12" stroke="#b0b0b0" stroke-width="1.1"/></svg>
<div class="t" style="left:1480.5px;top:994.6px;font-size:16px;color:#a8a8a8;">210%</div>
<div class="a" style="left:778px;top:277px;width:653px;height:77px;background:#fff;border:1px solid #7d7d7d;box-shadow:0 4px 14px rgba(0,0,0,0.28)"></div>
<div class="a" style="left:779px;top:322px;width:651px;height:1px;background:#a8a8a8;"></div>
<div class="t" style="left:791px;top:291.9px;font-size:18px;color:#000;">Data Validation</div>
<div class="t" style="left:1321.5px;top:291.7px;font-size:18px;color:#000;">?</div>
<svg class="a" style="left:1386px;top:290px;" width="20" height="20" viewBox="0 0 20 20"><path d="M2 2 L17.5 17.5 M17.5 2 L2 17.5" stroke="#000" stroke-width="1.1" fill="none"/></svg>
<div class="t" style="left:784.5px;top:329.6px;font-size:16.1px;color:#000;letter-spacing:-0.2px;">=Sheet2!$A$1:$A$12</div>
<div class="a" style="left:1393px;top:319px;width:40px;height:39px;background:#dcdcdc;border:5px solid #000;border-radius:7px"></div>
<div class="a" style="left:1402px;top:328px;width:22px;height:20px;background:#f4f4f4;"></div>
<svg class="a" style="left:1404px;top:327px;" width="18" height="21" viewBox="0 0 18 21"><rect x="1.5" y="1.5" width="15" height="18" fill="#fff" stroke="#7b7b7b" stroke-width="1.6"/><path d="M1.5 6 H16.5" stroke="#7b7b7b" stroke-width="1.4"/><path d="M7.5 8 H10.5 V11.5 H13.5 V13.5 L9 17.5 L4.5 13.5 V11.5 H7.5 Z" fill="#3d7fd0"/><path d="M4.2 9.5 V12 M13.8 9.5 V12" stroke="#3d7fd0" stroke-width="1.4"/></svg>
<svg class="a" style="left:0;top:0" width="1550" height="1020"><g fill="#000">
<rect x="893" y="378" width="5" height="66"/><path d="M895.5 352 L906 382 L885 382 Z"/>
<rect x="1412" y="382" width="5" height="20"/><path d="M1414.5 358 L1424.5 385 L1404.5 385 Z"/>
<rect x="290" y="767.5" width="130" height="5"/><path d="M263.5 770 L294 760.5 L294 780 Z"/>
</g></svg>
<div class="t" style="left:777.4px;top:440.9px;font-size:30.5px;color:#000;font-weight:bold;letter-spacing:0.22px;">Data range added</div>
<div class="t" style="left:1346.7px;top:405.3px;font-size:27.5px;color:#000;font-weight:bold;letter-spacing:0.35px;">Click here</div>
<div class="t" style="left:432.5px;top:754.0px;font-size:33.2px;color:#000;font-weight:bold;">Select the data</div>
<div class="a" style="left:1399.0px;top:437.4px;width:32.6px;height:32.6px;border-radius:50%;background:#000"></div>
<div class="t" style="left:1415.3px;transform:translateX(-50%);top:443.0px;font-size:22px;color:#fff;font-weight:bold;">2</div>
<div class="a" style="left:522.2px;top:792.2px;width:32.6px;height:32.6px;border-radius:50%;background:#000"></div>
<div class="t" style="left:538.5px;transform:translateX(-50%);top:797.8px;font-size:22px;color:#fff;font-weight:bold;">1</div>
</body></html>
